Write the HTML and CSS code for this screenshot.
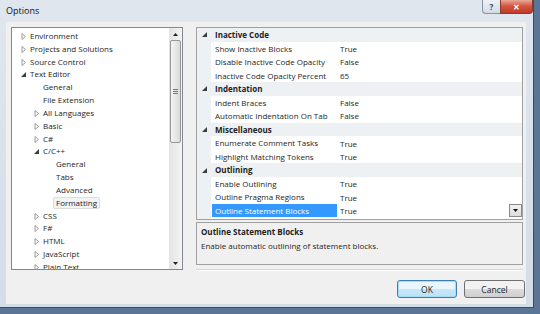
FILE: index.html
```html
<!DOCTYPE html>
<html lang="en">

<head>
    <meta charset="UTF-8">
    <title>Options</title>
    <link rel="stylesheet" href="styles.css">
</head>

<body>
    <svg class="defs" width="0" height="0">
        <defs>
            <polygon id="col" points="1,0.5 4.5,3.5 1,6.5" fill="none" stroke="#9a9a9a" stroke-width="1" />
            <polygon id="exp" points="5,1 5,6 0,6" fill="#3c3c3c" />
        </defs>
    </svg>

    <div class="window">
        <div class="titlebar">
            <span class="title">Options</span>
            <div class="caption">
                <span class="cap-help">?</span>
                <span class="cap-close">&#x2715;</span>
            </div>
        </div>

        <div class="client">
            <div class="main">
                <!-- category tree -->
                <div class="tree">
                    <ul class="tree-list">
                        <li class="lvl0"><svg class="tw"><use href="#col" /></svg>Environment</li>
                        <li class="lvl0"><svg class="tw"><use href="#col" /></svg>Projects and Solutions</li>
                        <li class="lvl0"><svg class="tw"><use href="#col" /></svg>Source Control</li>
                        <li class="lvl0"><svg class="tw"><use href="#exp" /></svg>Text Editor</li>
                        <li class="lvl1">General</li>
                        <li class="lvl1">File Extension</li>
                        <li class="lvl1"><svg class="tw"><use href="#col" /></svg>All Languages</li>
                        <li class="lvl1"><svg class="tw"><use href="#col" /></svg>Basic</li>
                        <li class="lvl1"><svg class="tw"><use href="#col" /></svg>C#</li>
                        <li class="lvl1"><svg class="tw"><use href="#exp" /></svg>C/C++</li>
                        <li class="lvl2">General</li>
                        <li class="lvl2">Tabs</li>
                        <li class="lvl2">Advanced</li>
                        <li class="lvl2"><span class="current">Formatting</span></li>
                        <li class="lvl1"><svg class="tw"><use href="#col" /></svg>CSS</li>
                        <li class="lvl1"><svg class="tw"><use href="#col" /></svg>F#</li>
                        <li class="lvl1"><svg class="tw"><use href="#col" /></svg>HTML</li>
                        <li class="lvl1"><svg class="tw"><use href="#col" /></svg>JavaScript</li>
                        <li class="lvl1"><svg class="tw"><use href="#col" /></svg>Plain Text</li>
                    </ul>
                    <div class="vscroll">
                        <div class="sb-arrow"><svg width="5" height="3"><polygon points="0,3 2.5,0 5,3" fill="#222" /></svg></div>
                        <div class="sb-track">
                            <div class="sb-thumb"><span class="grip"></span></div>
                        </div>
                        <div class="sb-arrow"><svg width="5" height="3"><polygon points="0,0 2.5,3 5,0" fill="#222" /></svg></div>
                    </div>
                </div>

                <!-- property grid -->
                <div class="right">
                    <div class="grid">
                        <div class="row cat"><svg class="tw gt"><use href="#exp" /></svg><span class="name">Inactive Code</span></div>
                        <div class="row"><span class="name">Show Inactive Blocks</span><span class="val">True</span></div>
                        <div class="row"><span class="name">Disable Inactive Code Opacity</span><span class="val">False</span></div>
                        <div class="row"><span class="name">Inactive Code Opacity Percent</span><span class="val">65</span></div>
                        <div class="row cat"><svg class="tw gt"><use href="#exp" /></svg><span class="name">Indentation</span></div>
                        <div class="row"><span class="name">Indent Braces</span><span class="val">False</span></div>
                        <div class="row"><span class="name">Automatic Indentation On Tab</span><span class="val">False</span></div>
                        <div class="row cat"><svg class="tw gt"><use href="#exp" /></svg><span class="name">Miscellaneous</span></div>
                        <div class="row"><span class="name">Enumerate Comment Tasks</span><span class="val">True</span></div>
                        <div class="row"><span class="name">Highlight Matching Tokens</span><span class="val">True</span></div>
                        <div class="row cat"><svg class="tw gt"><use href="#exp" /></svg><span class="name">Outlining</span></div>
                        <div class="row"><span class="name">Enable Outlining</span><span class="val">True</span></div>
                        <div class="row"><span class="name">Outline Pragma Regions</span><span class="val">True</span></div>
                        <div class="row selected"><span class="name">Outline Statement Blocks</span><span class="val">True<span class="drop"><svg width="5" height="4"><polygon points="0,0 5,0 2.5,3" fill="#111" /></svg></span></span></div>
                    </div>
                    <div class="desc">
                        <div class="desc-title">Outline Statement Blocks</div>
                        <div>Enable automatic outlining of statement blocks.</div>
                    </div>
                    <div class="sep"></div>
                </div>
            </div>

            <div class="buttons">
                <button class="btn default">OK</button>
                <button class="btn">Cancel</button>
            </div>
        </div>
    </div>
</body>

</html>
```

FILE: styles.css
```css
* {
    box-sizing: border-box;
}

body {
    margin: 0;
    background: #5a7596;
    font-family: "Open Sans", "Liberation Sans", sans-serif;
    font-size: 8px;
    color: #1e1e1e;
}

.defs {
    position: absolute;
}

.window {
    width: 534px;
    height: 308px;
    background: linear-gradient(#dfe6ee, #d3dde8);
    border-right: 1px solid #3b4a5e;
    border-bottom: 1px solid #3b4a5e;
    display: flex;
    flex-direction: column;
}

/* title bar */
.titlebar {
    height: 22px;
    display: flex;
    justify-content: space-between;
    align-items: flex-start;
    padding-left: 6px;
}

.title {
    line-height: 21px;
    font-size: 9px;
    color: #111;
}

.caption {
    display: flex;
}

.cap-help,
.cap-close {
    height: 14px;
    display: flex;
    align-items: center;
    justify-content: center;
    font-weight: bold;
}

.cap-help {
    width: 18px;
    font-size: 8px;
    color: #3a4a5e;
    border: 1px solid #8794a5;
    border-top: none;
    border-right: none;
    border-radius: 0 0 0 4px;
    background: linear-gradient(#eef2f6, #d2dbe5);
}

.cap-close {
    width: 33px;
    font-size: 8px;
    color: #fff;
    border: 1px solid #8a3a2e;
    border-top: none;
    border-radius: 0 0 4px 0;
    background: linear-gradient(#e9a896, #d0533d 50%, #c0392a);
}

/* client area */
.client {
    margin-left: 6px;
    width: 520px;
    height: 282px;
    background: #f0f0f0;
    padding: 5px 1px 0 5px;
}

.main {
    display: flex;
    gap: 13px;
}

/* tree */
.tree {
    width: 172px;
    height: 243px;
    border: 1px solid #828790;
    background: #fff;
    display: flex;
}

.tree-list {
    flex: 1;
    list-style: none;
    margin: 0;
    padding: 2px 0 0 0;
    overflow: hidden;
}

.tree-list li {
    height: 12.83px;
    line-height: 12.83px;
    white-space: nowrap;
    display: flex;
    align-items: center;
}

.tw {
    width: 6px;
    height: 7px;
    margin-right: 3px;
    flex: none;
}

.lvl0 {
    padding-left: 9px;
}

.lvl1 {
    padding-left: 22px;
}

.lvl2 {
    padding-left: 44px;
}

.lvl1:not(:has(.tw)) {
    padding-left: 31px;
}

.current {
    background: #f3f3f3;
    border: 1px solid #dcdcdc;
    border-radius: 2px;
    padding: 0 2px;
    margin-left: -3px;
    line-height: 10px;
}

.vscroll {
    width: 13px;
    display: flex;
    flex-direction: column;
    background: linear-gradient(90deg, #e3e3e3, #f4f4f4);
}

.sb-arrow {
    height: 12px;
    display: flex;
    align-items: center;
    justify-content: center;
}

.sb-track {
    flex: 1;
    padding: 0 1px;
}

.sb-thumb {
    height: 103px;
    border: 1px solid #979797;
    border-radius: 2px;
    background: linear-gradient(90deg, #f4f4f4, #dadada);
    display: flex;
    align-items: center;
    justify-content: center;
}

.grip {
    width: 5px;
    height: 5px;
    border-top: 1px solid #777;
    border-bottom: 1px solid #777;
    position: relative;
}

.grip::after {
    content: "";
    position: absolute;
    left: 0;
    right: 0;
    top: 1px;
    border-top: 1px solid #777;
}

/* property grid */
.right {
    width: 327px;
    display: flex;
    flex-direction: column;
}

.grid {
    height: 193px;
    border: 1px solid #a0a0a0;
    background: linear-gradient(90deg, #eef1f4 14px, #fff 14px);
}

.row {
    height: 13.54px;
    display: grid;
    grid-template-columns: 14px 126px 1fr;
    align-items: center;
    white-space: nowrap;
}

.row .name {
    grid-column: 2;
    padding-left: 4px;
    height: 100%;
    line-height: 13.54px;
}

.row .val {
    grid-column: 3;
    padding-left: 3px;
    display: flex;
    justify-content: space-between;
    align-items: center;
}

.row.cat {
    background: #eef1f4;
    font-weight: bold;
}

.gt {
    grid-column: 1;
    margin-left: 5px;
}

.row.selected .name {
    background: #3399ff;
    color: #fff;
    margin-left: 1px;
    padding-left: 3px;
}

.drop {
    width: 13px;
    height: 13px;
    border: 1px solid #8a8a8a;
    background: linear-gradient(#f2f2f2, #dcdcdc);
    display: flex;
    align-items: center;
    justify-content: center;
}

/* description */
.desc {
    height: 43px;
    margin-top: 2px;
    border: 1px solid #a0a0a0;
    padding: 2px 4px;
    line-height: 14px;
}

.desc-title {
    font-weight: bold;
}

.sep {
    margin-top: 4px;
    height: 2px;
    border-top: 1px solid #d5d5d5;
    border-bottom: 1px solid #fff;
}

/* dialog buttons */
.buttons {
    display: flex;
    justify-content: flex-end;
    gap: 7px;
    margin-top: 9px;
}

.btn {
    width: 61px;
    height: 18px;
    font-family: inherit;
    font-size: 8.5px;
    color: #1e1e1e;
    border: 1px solid #707070;
    border-radius: 3px;
    background: linear-gradient(#f2f2f2 50%, #dddddd 50%, #cfcfcf);
    padding: 0;
}

.btn.default {
    width: 60px;
    border-color: #3c7fb1;
    background: linear-gradient(#eaf6fd 50%, #c9e7f9 50%, #bbe0f6);
    box-shadow: inset 0 0 0 1px #a6dcf7;
}
```
